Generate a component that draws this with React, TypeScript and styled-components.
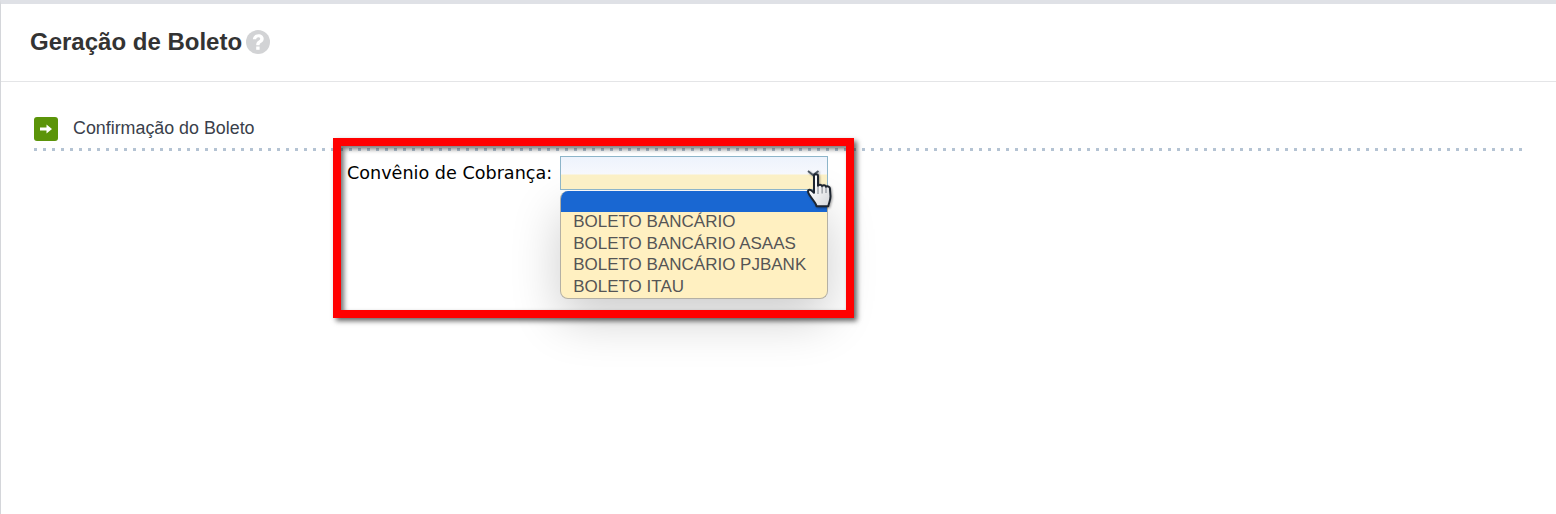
import React from 'react';
import styled, { createGlobalStyle } from 'styled-components';

const Global = createGlobalStyle`
  html, body {
    margin: 0;
    padding: 0;
    background: #fff;
    overflow: hidden;
  }
  body {
    font-family: "Liberation Sans", Arial, sans-serif;
  }
`;

const Page = styled.div`
  position: relative;
  width: 1556px;
  height: 514px;
  box-sizing: border-box;
  border-top: 4px solid #dfe1e6;
  border-left: 1px solid #d4d6da;
  background: #fff;
  overflow: hidden;
`;

const Header = styled.header`
  display: flex;
  align-items: center;
  gap: 4px;
  height: 78px;
  box-sizing: border-box;
  padding-left: 29px;
  padding-bottom: 2px;
  border-bottom: 1px solid #e4e5e7;
`;

const Title = styled.h1`
  margin: 0;
  font-size: 24px;
  font-weight: 700;
  color: #333;
`;

const Body = styled.section`
  padding: 35px 33px 0 33px;
`;

const SectionHead = styled.div`
  display: flex;
  align-items: center;
  gap: 15px;
  height: 24px;
  margin-bottom: 7px;
`;

const ArrowBadge = styled.span`
  display: flex;
  align-items: center;
  justify-content: center;
  width: 24px;
  height: 24px;
  border-radius: 3px;
  background: #5b9409;
`;

const SectionTitle = styled.span`
  font-size: 17.85px;
  padding-bottom: 2px;
  color: #3a3f4b;
`;

const Dotted = styled.div`
  height: 3px;
  background-image: linear-gradient(to right, #b4c3d3 3px, transparent 3px);
  background-size: 9px 3px;
`;

const Form = styled.div`
  display: flex;
  align-items: flex-start;
  gap: 8px;
  margin: 5px 0 0 313px;
`;

const Label = styled.label`
  font-family: "DejaVu Sans", Verdana, sans-serif;
  font-size: 17.6px;
  line-height: 20px;
  margin-top: 7px;
  white-space: nowrap;
  color: #000;
`;

const SelectWrap = styled.div`
  position: relative;
  width: 268px;
`;

const SelectBox = styled.div`
  position: relative;
  z-index: 1;
  height: 34px;
  box-sizing: border-box;
  border: 1px solid #8db5c9;
  background: linear-gradient(to bottom, #eef3fc 0, #f6f8fd 17px, #fbf0c6 18px, #fbf0c6 100%);
`;

const Options = styled.ul`
  list-style: none;
  margin: 1px 0 0;
  padding: 0;
  overflow: hidden;
  border-radius: 8px;
  border: 1px solid #b4b0a4;
  border-top: none;
  background: #fff0c1;
  box-shadow: 0 20px 50px rgba(0, 0, 0, 0.2);
`;

const Option = styled.li<{ $selected?: boolean }>`
  height: ${(p) => (p.$selected ? '21px' : '21.6px')};
  box-sizing: border-box;
  padding-left: 12px;
  font-size: 17px;
  line-height: 20px;
  color: #555;
  background: ${(p) => (p.$selected ? '#1967d2' : 'transparent')};
`;

const HighlightBox = styled.div`
  position: absolute;
  z-index: 2;
  left: 332px;
  top: 134px;
  width: 521px;
  height: 180px;
  box-sizing: border-box;
  border: 8px solid #ff0000;
  box-shadow: 3px 3px 5px rgba(0, 0, 0, 0.6), inset 3px 3px 5px rgba(0, 0, 0, 0.55);
  pointer-events: none;
`;

const Cursor = styled.svg`
  position: absolute;
  z-index: 3;
  left: 804px;
  top: 164px;
  filter: drop-shadow(1px 1px 1px rgba(0, 0, 0, 0.35));
`;

const options = ['BOLETO BANCÁRIO', 'BOLETO BANCÁRIO ASAAS', 'BOLETO BANCÁRIO PJBANK', 'BOLETO ITAU'];

const App: React.FC = () => {
  return (
    <Page>
      <Global />
      <Header>
        <Title>Geração de Boleto</Title>
        <svg width="24" height="24" viewBox="0 0 24 24">
          <circle cx="12" cy="12" r="12" fill="#d2d3d5" />
          <path d="M6.800 9.200C7.200 6 9.400 4.200 12.400 4.200c3.200 0 5.300 1.900 5.300 4.500 0 2-1 3-2.500 4-1.200.8-1.600 1.300-1.600 2.600h-3.400c0-2.300.7-3.400 2.300-4.500 1.100-.8 1.700-1.300 1.700-2.100 0-.9-.7-1.500-1.800-1.500-1.200 0-2 .7-2.300 2.100z" fill="#fff" />
          <rect x="10.200" y="16.500" width="3.400" height="3.300" fill="#fff" />
        </svg>
      </Header>
      <Body>
        <SectionHead>
          <ArrowBadge>
            <svg width="14" height="12" viewBox="0 0 14 12">
              <path d="M1 4.500h6.500V1.500L13 6l-5.500 4.500v-3H1z" fill="#fff" />
            </svg>
          </ArrowBadge>
          <SectionTitle>Confirmação do Boleto</SectionTitle>
        </SectionHead>
        <Dotted />
        <Form>
          <Label>Convênio de Cobrança:</Label>
          <SelectWrap>
            <SelectBox />
            <Options>
              <Option $selected />
              {options.map((o) => (
                <Option key={o}>{o}</Option>
              ))}
            </Options>
          </SelectWrap>
        </Form>
      </Body>
      <HighlightBox />
      <Cursor width="32" height="46" viewBox="0 0 32 46">
        <defs>
          <linearGradient id="hand" x1="0" y1="0" x2="1" y2="1">
            <stop offset="0.2" stopColor="#ffffff" />
            <stop offset="1" stopColor="#d4d6da" />
          </linearGradient>
        </defs>
        <path d="M3 3l5 4 5.500-4" fill="none" stroke="#4a5560" strokeWidth="1.800" />
        <path
          d="M9 8c0-2.200 4-2.200 4 0v10c.5-1.700 3.800-1.700 4.100.3.600-1.500 3.700-1.300 4 .7.800-1.100 3.500-.7 3.800 1.200l.6 8c0 4.500-1.700 6.500-2.200 10H11.500c-.5-3.200-3.200-5.400-7-11.200-1.100-1.700-2.200-3.500-1.100-4.700 1.100-1.100 3.300-.3 5.600 2.500z"
          fill="url(#hand)"
          stroke="#1d2530"
          strokeWidth="2"
          strokeLinejoin="round"
        />
        <path d="M13 18v8M17.100 18.500v7M21 19v6" stroke="#7b8089" strokeWidth="1" fill="none" />
      </Cursor>
    </Page>
  );
};

export default App;
